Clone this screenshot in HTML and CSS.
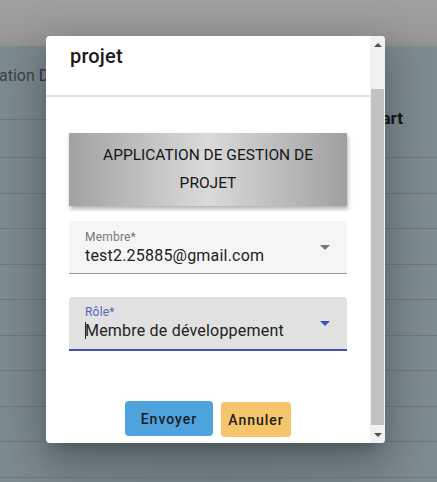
FILE: index.html
```html
<!DOCTYPE html>
<html lang="fr">
<head>
<meta charset="utf-8">
<title>Ajouter un membre</title>
<link rel="stylesheet" href="styles.css">
</head>
<body>
<div class="page">
  <div class="topbar"></div>
  <div class="crumb"><span class="crumb-a">ation </span><span class="crumb-b">De</span></div>
  <div class="col-head">Départ</div>
  <div class="rows">
    <div class="row"></div><div class="row"></div><div class="row"></div><div class="row"></div><div class="row"></div>
    <div class="row"></div><div class="row"></div><div class="row"></div><div class="row"></div><div class="row"></div>
  </div>
</div>

<div class="dialog">
  <div class="dlg-main">
    <div class="dlg-title">projet</div>
    <div class="dlg-divider"></div>
    <div class="dlg-body">
      <div class="banner">APPLICATION DE GESTION DE<br>PROJET</div>
      <div class="field">
        <div class="field-text">
          <div class="label">Membre*</div>
          <div class="value">test2.25885@gmail.com</div>
        </div>
        <span class="arrow"></span>
      </div>
      <div class="field focused">
        <div class="field-text">
          <div class="label">Rôle*</div>
          <div class="value"><span class="caret"></span>Membre de développement</div>
        </div>
        <span class="arrow"></span>
      </div>
      <div class="actions">
        <button class="btn btn-send">Envoyer</button>
        <button class="btn btn-cancel">Annuler</button>
      </div>
    </div>
  </div>
  <div class="scrollbar">
    <div class="sb-btn"><span class="sb-up"></span></div>
    <div class="sb-track"><div class="sb-thumb"></div></div>
    <div class="sb-btn"><span class="sb-down"></span></div>
  </div>
</div>
</body>
</html>
```

FILE: styles.css
```css
* { box-sizing: border-box; }
html, body { margin: 0; padding: 0; }
body {
  width: 437px;
  height: 482px;
  overflow: hidden;
  font-family: Roboto, "Liberation Sans", sans-serif;
  background: #7b8a8d;
}
.page {
  width: 437px;
  height: 482px;
  overflow: hidden;
  background: linear-gradient(to right, #7c8b8e, #76858a 50%, #7d8c8f);
}
.topbar {
  height: 46px;
  background: linear-gradient(#a0a0a0, #9a9a9a 70%, #939393);
}
.crumb {
  height: 60px;
  padding-top: 20px;
  font-size: 16px;
  line-height: 19px;
  color: #3c4446;
  white-space: nowrap;
  margin-left: -1px;
}
.crumb-b { color: #3e2f58; }
.col-head {
  height: 51px;
  text-align: right;
  padding-right: 34px;
  padding-top: 2px;
  font-size: 17px;
  font-weight: 700;
  line-height: 20px;
  color: #141818;
  background: linear-gradient(#6d7a7c, #6d7a7c) no-repeat 0 13px / 60px 1px;
}
.rows { display: flex; flex-direction: column; }
.row {
  height: 35.5px;
  border-top: 1px solid #6d797b;
}

.dialog {
  position: absolute;
  left: 46px;
  top: 36px;
  width: 339px;
  height: 407px;
  background: #fff;
  border-radius: 4px;
  display: flex;
  overflow: hidden;
  box-shadow: 0 11px 15px -7px rgba(0,0,0,.2), 0 24px 38px 3px rgba(0,0,0,.14), 0 9px 46px 8px rgba(0,0,0,.12);
}
.dlg-main {
  flex: 1;
  display: flex;
  flex-direction: column;
  overflow: hidden;
}
.dlg-title {
  height: 59px;
  padding: 8px 0 0 24px;
  font-size: 20px;
  font-weight: 500;
  line-height: 24px;
  letter-spacing: 0.15px;
  color: #1a1a1a;
}
.dlg-divider {
  height: 2px;
  background: #dcdee8;
}
.dlg-body {
  padding: 36px 23px 0;
  display: flex;
  flex-direction: column;
}
.banner {
  height: 73px;
  padding-top: 8px;
  text-align: center;
  font-size: 15.5px;
  line-height: 28px;
  color: #151515;
  background: linear-gradient(to right, #a2a2a2, #dadada 50%, #a0a0a0);
  box-shadow: 1px 3px 4px rgba(0,0,0,.3);
}
.field {
  margin-top: 15px;
  height: 53px;
  background: #f5f5f5;
  border-bottom: 1px solid #9a9a9a;
  border-radius: 4px 4px 0 0;
  display: flex;
  align-items: center;
  padding: 0 17px 0 16px;
}
.field.focused {
  margin-top: 23px;
  height: 54px;
  background: #e1e1e1;
  border-bottom: 2px solid #3f51b5;
}
.field-text {
  flex: 1;
  align-self: flex-start;
  padding-top: 8px;
}
.focused .field-text { padding-top: 7px; }
.label {
  font-size: 12px;
  line-height: 16px;
  letter-spacing: 0.2px;
  color: #777;
}
.focused .label { color: #5464bf; }
.value {
  font-size: 16px;
  line-height: 21px;
  letter-spacing: 0.2px;
  color: #222;
  white-space: nowrap;
}
.caret {
  display: inline-block;
  width: 1px;
  height: 17px;
  vertical-align: -3px;
  background: #222;
  margin-right: -1px;
}
.arrow {
  width: 0;
  height: 0;
  border-left: 5px solid transparent;
  border-right: 5px solid transparent;
  border-top: 5px solid #757575;
}
.focused .arrow { border-top-color: #3f51b5; }

.actions {
  margin-top: 50px;
  display: flex;
  justify-content: center;
  gap: 8px;
}
.btn {
  height: 35px;
  border: none;
  border-radius: 4px;
  font-family: Roboto, "Liberation Sans", sans-serif;
  font-size: 14px;
  font-weight: 500;
  letter-spacing: 1px;
  color: #1c1c1c;
}
.btn-send { width: 88px; background: #4fa3dc; }
.btn-cancel { width: 70px; margin-top: 1px; background: #f5c56c; }

.scrollbar {
  width: 15px;
  background: #f1f1f1;
  display: flex;
  flex-direction: column;
}
.sb-btn {
  height: 17px;
  display: flex;
  align-items: center;
  justify-content: center;
}
.sb-up, .sb-down {
  width: 0;
  height: 0;
  border-left: 4px solid transparent;
  border-right: 4px solid transparent;
}
.sb-up { border-bottom: 4px solid #505050; }
.sb-down { border-top: 4px solid #505050; }
.sb-track {
  flex: 1;
  padding: 36px 1px 1px;
  display: flex;
}
.sb-thumb {
  flex: 1;
  background: #c1c1c1;
}
```
